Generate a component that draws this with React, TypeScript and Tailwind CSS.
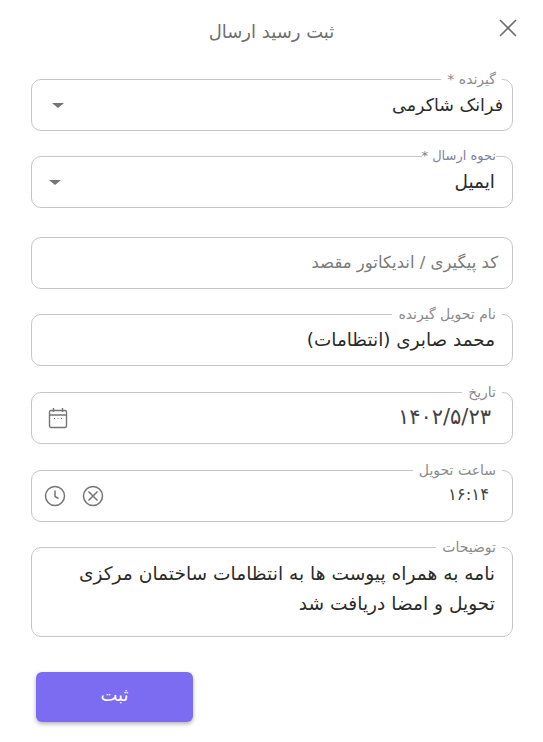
import { X } from 'lucide-react';
import type { ReactNode } from 'react';

const FONT = "font-['DejaVu_Sans',sans-serif]";

function Field({
  label,
  children,
  className = '',
  labelClass = 'right-[10px] px-[6px] text-[14px] text-[#8b8b8b]',
}: {
  label?: string;
  children: ReactNode;
  className?: string;
  labelClass?: string;
}) {
  return (
    <div className={`relative ml-[31px] mr-[30px] h-[52px] rounded-[10px] border border-[#c6c6c6] flex items-center ${className}`}>
      {label && (
        <span className={`absolute -top-[10px] bg-white leading-[18px] ${labelClass}`}>
          {label}
        </span>
      )}
      {children}
    </div>
  );
}

function Caret({ className = '' }: { className?: string }) {
  return <span className={`w-0 h-0 border-x-[6px] border-x-transparent border-t-[5px] border-t-[#757575] ${className}`} />;
}

export default function App() {
  return (
    <div dir="rtl" className={`relative w-[543px] h-[742px] bg-white overflow-hidden ${FONT}`}>
      <h1 className="pt-[20px] h-[79px] text-center text-[18px] leading-[24px] text-[#6f6f6f]">ثبت رسید ارسال</h1>
      <button className="absolute top-[13px] left-[493px] text-[#6e6e6e]">
        <X className="w-[30px] h-[30px]" strokeWidth={1.3} />
      </button>

      <Field label="گیرنده *" className="justify-between pr-[9px] pl-[20px]">
        <span className="text-[17.5px] text-[#2b2b2b]">فرانک شاکرمی</span>
        <Caret />
      </Field>

      <Field
        label="نحوه ارسال *"
        labelClass="right-[16px] text-[13px] text-[#7d8398]"
        className="mt-[25px] justify-between pr-[17px] pl-[17px]"
      >
        <span className="text-[18.5px] text-[#2b2b2b]">ایمیل</span>
        <Caret />
      </Field>

      <Field className="mt-[29px] pr-[14px]">
        <span className="text-[16.5px] text-[#7a7a7a]">کد پیگیری / اندیکاتور مقصد</span>
      </Field>

      <Field label="نام تحویل گیرنده" className="mt-[25px] pr-[17px]">
        <span className="text-[18.4px] text-[#2b2b2b]">محمد صابری (انتظامات)</span>
      </Field>

      <Field label="تاریخ" className="mt-[26px] justify-between pr-[21px] pl-[16px]">
        <span className="text-[21px] leading-[26px] -mt-[2px] text-[#444444]">۱۴۰۲/۵/۲۳</span>
        <svg width="20" height="22" viewBox="0 0 20 22" fill="none" stroke="#757575" strokeWidth="1.4">
          <rect x="1.5" y="3.5" width="17" height="17" rx="1.5" />
          <path d="M1.5 8h17M5.5 1v4M14.5 1v4" />
          <path d="M6 11.5h1M9.5 11.5h1M13 11.5h1" strokeWidth="1" />
        </svg>
      </Field>

      <Field label="ساعت تحویل" className="mt-[26px] justify-between pr-[23px] pl-[12px]">
        <span className="text-[16.5px] leading-[22px] -mt-[2px] text-[#444444]">۱۶:۱۴</span>
        <div dir="ltr" className="flex items-center gap-[16px]">
          <svg width="22" height="22" viewBox="0 0 22 22" fill="none" stroke="#757575" strokeWidth="1.5">
            <circle cx="11" cy="11" r="9.5" />
            <path d="M11 5.5v6l3.5 2" />
          </svg>
          <svg width="22" height="22" viewBox="0 0 22 22" fill="none" stroke="#757575" strokeWidth="1.5">
            <circle cx="11" cy="11" r="9.5" />
            <path d="M6.5 6.5l9 9M15.5 6.5l-9 9" />
          </svg>
        </div>
      </Field>

      <Field label="توضیحات" className="mt-[25px] h-[90px] items-start pr-[17px] pl-[40px] pt-[11px]">
        <p className="text-[18.6px] leading-[30px] text-[#2b2b2b]">
          نامه به همراه پیوست ها به انتظامات ساختمان مرکزی تحویل و امضا دریافت شد
        </p>
      </Field>

      <div dir="ltr" className="pl-[36px] mt-[35px]">
        <button className="w-[157px] h-[50px] pb-[5px] rounded-[6px] bg-[#7c6cf2] text-white text-[18px] font-medium shadow-[0_2px_4px_rgba(0,0,0,0.3)]">
          ثبت
        </button>
      </div>
    </div>
  );
}
